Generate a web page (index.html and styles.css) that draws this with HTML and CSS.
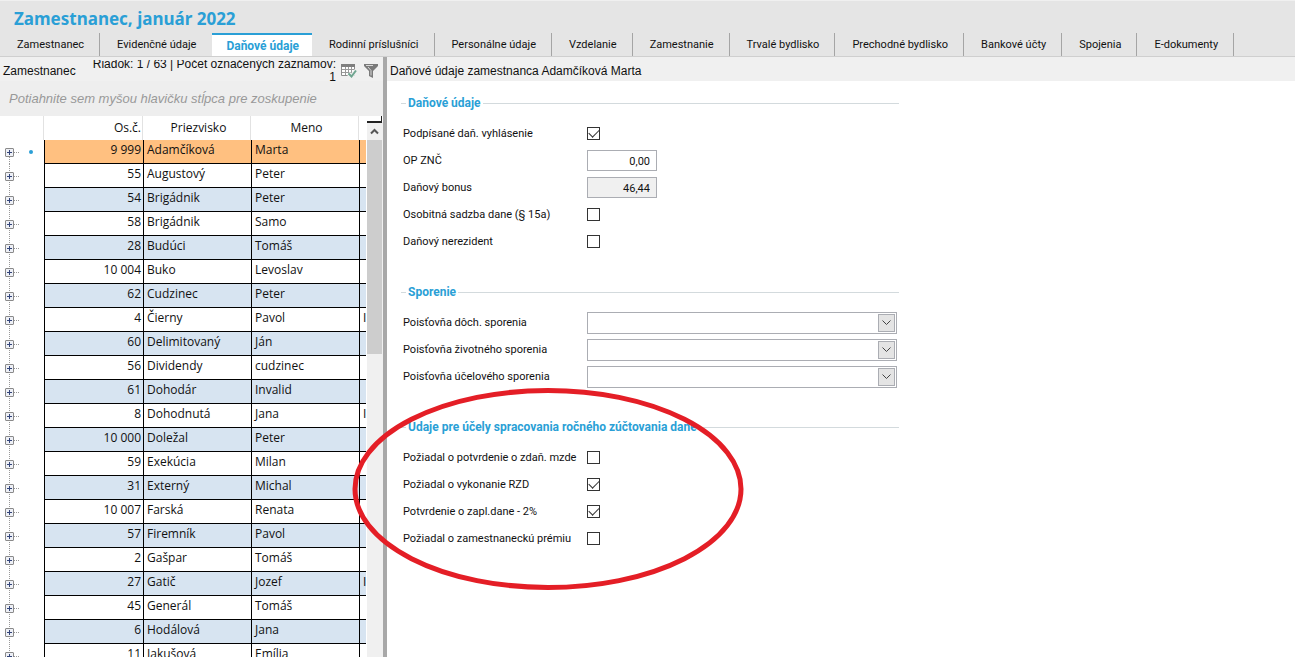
FILE: index.html
```html
<!DOCTYPE html>
<html lang="sk">
<head>
<meta charset="utf-8">
<title>Zamestnanec, január 2022</title>
<link rel="stylesheet" href="styles.css">
</head>
<body>
<div class="app">
  <header class="header">
    <h1 class="title">Zamestnanec, január 2022</h1>
    <nav class="tabs">
      <button class="tab">Zamestnanec</button>
      <button class="tab before-active">Evidenčné údaje</button>
      <button class="tab active">Daňové údaje</button>
      <button class="tab">Rodinní príslušníci</button>
      <button class="tab">Personálne údaje</button>
      <button class="tab">Vzdelanie</button>
      <button class="tab">Zamestnanie</button>
      <button class="tab">Trvalé bydlisko</button>
      <button class="tab">Prechodné bydlisko</button>
      <button class="tab">Bankové účty</button>
      <button class="tab">Spojenia</button>
      <button class="tab">E-dokumenty</button>
    </nav>
  </header>
  <div class="body">
    <aside class="side">
      <div class="side-head">
        <span class="side-title">Zamestnanec</span>
        <span class="side-count">Riadok: 1 / 63 | Počet označených záznamov: 1</span>
        <button class="icon-btn" aria-label="Výber stĺpcov">
          <svg width="16" height="15" viewBox="0 0 16 15"><path d="M.5 1.5h13v11H.5z" fill="#fff" stroke="#8c8c8c"/><path d="M0 1h14v3H0z" fill="#7f7f7f"/><path d="M1 6.500h12M1 9.500h12M4.500 4v8M7.500 4v8M10.500 4v8" stroke="#9a9a9a" fill="none"/><path d="M7.500 10.500l3 3L15 7.500" stroke="#f0f0f0" stroke-width="4" fill="none"/><path d="M7.500 10.500l3 3L15 7.500" stroke="#6fa590" stroke-width="2" fill="none"/></svg>
        </button>
        <button class="icon-btn" aria-label="Filter">
          <svg width="14" height="14" viewBox="0 0 14 14"><path d="M0 0h14v2L9 7v7L5 12V7L0 2z" fill="#7a7a7a"/><path d="M2 1.500h7M4 3l3 3.500v5" stroke="#d8d8d8" fill="none"/></svg>
        </button>
      </div>
      <div class="group-hint">Potiahnite sem myšou hlavičku stĺpca pre zoskupenie</div>
      <div class="grid-area">
        <div class="grid-view">
          <table class="grid">
            <colgroup><col class="c-tree"><col class="c-num"><col class="c-name"><col class="c-name"><col></colgroup>
            <thead><tr><th></th><th class="num">Os.č.</th><th>Priezvisko</th><th>Meno</th><th></th></tr></thead>
            <tbody>
              <tr class="current"><td><button class="exp" aria-label="Rozbaliť"></button><i class="mark"></i></td><td>9 999</td><td>Adamčíková</td><td>Marta</td><td></td></tr>
              <tr><td><button class="exp" aria-label="Rozbaliť"></button></td><td>55</td><td>Augustový</td><td>Peter</td><td></td></tr>
              <tr><td><button class="exp" aria-label="Rozbaliť"></button></td><td>54</td><td>Brigádnik</td><td>Peter</td><td></td></tr>
              <tr><td><button class="exp" aria-label="Rozbaliť"></button></td><td>58</td><td>Brigádnik</td><td>Samo</td><td></td></tr>
              <tr><td><button class="exp" aria-label="Rozbaliť"></button></td><td>28</td><td>Budúci</td><td>Tomáš</td><td></td></tr>
              <tr><td><button class="exp" aria-label="Rozbaliť"></button></td><td>10 004</td><td>Buko</td><td>Levoslav</td><td></td></tr>
              <tr><td><button class="exp" aria-label="Rozbaliť"></button></td><td>62</td><td>Cudzinec</td><td>Peter</td><td></td></tr>
              <tr><td><button class="exp" aria-label="Rozbaliť"></button></td><td>4</td><td>Čierny</td><td>Pavol</td><td>I</td></tr>
              <tr><td><button class="exp" aria-label="Rozbaliť"></button></td><td>60</td><td>Delimitovaný</td><td>Ján</td><td></td></tr>
              <tr><td><button class="exp" aria-label="Rozbaliť"></button></td><td>56</td><td>Dividendy</td><td>cudzinec</td><td></td></tr>
              <tr><td><button class="exp" aria-label="Rozbaliť"></button></td><td>61</td><td>Dohodár</td><td>Invalid</td><td></td></tr>
              <tr><td><button class="exp" aria-label="Rozbaliť"></button></td><td>8</td><td>Dohodnutá</td><td>Jana</td><td>I</td></tr>
              <tr><td><button class="exp" aria-label="Rozbaliť"></button></td><td>10 000</td><td>Doležal</td><td>Peter</td><td></td></tr>
              <tr><td><button class="exp" aria-label="Rozbaliť"></button></td><td>59</td><td>Exekúcia</td><td>Milan</td><td></td></tr>
              <tr><td><button class="exp" aria-label="Rozbaliť"></button></td><td>31</td><td>Externý</td><td>Michal</td><td></td></tr>
              <tr><td><button class="exp" aria-label="Rozbaliť"></button></td><td>10 007</td><td>Farská</td><td>Renata</td><td></td></tr>
              <tr><td><button class="exp" aria-label="Rozbaliť"></button></td><td>57</td><td>Firemník</td><td>Pavol</td><td></td></tr>
              <tr><td><button class="exp" aria-label="Rozbaliť"></button></td><td>2</td><td>Gašpar</td><td>Tomáš</td><td></td></tr>
              <tr><td><button class="exp" aria-label="Rozbaliť"></button></td><td>27</td><td>Gatič</td><td>Jozef</td><td>I</td></tr>
              <tr><td><button class="exp" aria-label="Rozbaliť"></button></td><td>45</td><td>Generál</td><td>Tomáš</td><td></td></tr>
              <tr><td><button class="exp" aria-label="Rozbaliť"></button></td><td>6</td><td>Hodálová</td><td>Jana</td><td></td></tr>
              <tr><td><button class="exp" aria-label="Rozbaliť"></button></td><td>11</td><td>Jakušová</td><td>Emília</td><td></td></tr>
            </tbody>
          </table>
        </div>
        <div class="scroll">
          <div class="scroll-corner"></div>
          <button class="scroll-up" aria-label="Nahor"><svg width="9" height="7" viewBox="0 0 9 7"><path d="M1 5.500l3.500-3.500L8 5.500" fill="none" stroke="#555" stroke-width="2"/></svg></button>
          <div class="scroll-thumb"></div>
        </div>
      </div>
    </aside>
    <main class="main">
      <h2 class="main-head">Daňové údaje zamestnanca Adamčíková Marta</h2>
      <form class="form">
        <fieldset class="section">
          <legend>Daňové údaje</legend>
          <div class="row"><label for="f1">Podpísané daň. vyhlásenie</label><input class="check" type="checkbox" id="f1" checked></div>
          <div class="row"><label for="f2">OP ZNČ</label><input class="amount" type="text" id="f2" value="0,00"></div>
          <div class="row"><label for="f3">Daňový bonus</label><input class="amount" type="text" id="f3" value="46,44" readonly></div>
          <div class="row"><label for="f4">Osobitná sadzba dane (§ 15a)</label><input class="check" type="checkbox" id="f4"></div>
          <div class="row"><label for="f5">Daňový nerezident</label><input class="check" type="checkbox" id="f5"></div>
        </fieldset>
        <fieldset class="section">
          <legend>Sporenie</legend>
          <div class="row"><label for="f6">Poisťovňa dôch. sporenia</label><span class="combo"><select id="f6"><option></option></select><span class="arrow"><svg width="9" height="6" viewBox="0 0 9 6"><path d="M.5.5l4 4 4-4" fill="none" stroke="#444"/></svg></span></span></div>
          <div class="row"><label for="f7">Poisťovňa životného sporenia</label><span class="combo"><select id="f7"><option></option></select><span class="arrow"><svg width="9" height="6" viewBox="0 0 9 6"><path d="M.5.5l4 4 4-4" fill="none" stroke="#444"/></svg></span></span></div>
          <div class="row"><label for="f8">Poisťovňa účelového sporenia</label><span class="combo"><select id="f8"><option></option></select><span class="arrow"><svg width="9" height="6" viewBox="0 0 9 6"><path d="M.5.5l4 4 4-4" fill="none" stroke="#444"/></svg></span></span></div>
        </fieldset>
        <fieldset class="section">
          <legend>Údaje pre účely spracovania ročného zúčtovania dane</legend>
          <div class="row"><label for="f9">Požiadal o potvrdenie o zdaň. mzde</label><input class="check" type="checkbox" id="f9"></div>
          <div class="row"><label for="f10">Požiadal o vykonanie RZD</label><input class="check" type="checkbox" id="f10" checked></div>
          <div class="row"><label for="f11">Potvrdenie o zapl.dane - 2%</label><input class="check" type="checkbox" id="f11" checked></div>
          <div class="row"><label for="f12">Požiadal o zamestnaneckú prémiu</label><input class="check" type="checkbox" id="f12"></div>
        </fieldset>
      </form>
    </main>
  </div>
  <svg class="highlight" width="392" height="204" viewBox="0 0 392 204"><ellipse cx="196" cy="102" rx="193" ry="98.500" fill="none" stroke="#e41e26" stroke-width="5"/></svg>
</div>
</body>
</html>
```
FILE: styles.css
```css
* { box-sizing: border-box; }
body {
  margin: 0;
  font: 11px/16px Roboto, "Liberation Sans", sans-serif;
  color: #111;
  background: #fff;
}
button, input, select { font: inherit; color: inherit; margin: 0; }
button { border: 0; padding: 0; background: none; }
.app {
  position: relative;
  display: flex;
  flex-direction: column;
  height: 100vh;
  overflow: hidden;
}

/* header */
.header {
  background: #e5e5e5;
  border-top: 1px solid #f0f0f0;
  border-bottom: 1px solid #cfcfcf;
}
.title {
  margin: 0;
  padding: 6px 14px 2px;
  font: bold 17px/24px "Noto Sans", sans-serif;
  color: #2a9fd6;
}
.tabs { display: flex; }
.tab {
  height: 23px;
  padding: 1px 15px 0 17px;
  border-right: 1px solid #a5a5a5;
  white-space: nowrap;
}
.tab.before-active { border-right-color: transparent; }
.tab.active {
  padding: 0 13px 0 14px;
  background: #fff;
  border-top: 2px solid #2a9fd6;
  border-right: 0;
  color: #2a9fd6;
  font-size: 12px;
  font-weight: bold;
}

/* employee list */
.body { display: flex; flex: 1; min-height: 0; }
.side {
  display: flex;
  flex-direction: column;
  width: 387px;
  flex: none;
  border-right: 4px solid #a8a8a8;
  background: #f0f0f0;
}
.side-head {
  display: flex;
  align-items: center;
  height: 24px;
  padding: 3px 5px 0 3px;
  font: 12px/16px "Liberation Sans", sans-serif;
}
.side-count {
  flex: 1;
  height: 21px;
  display: flex;
  align-items: center;
  overflow: hidden;
  padding-left: 8px;
  margin-right: 5px;
  line-height: 13px;
  text-align: right;
}
.icon-btn { display: flex; }
.icon-btn + .icon-btn { margin-left: 7px; }
.group-hint {
  height: 35px;
  padding-left: 9px;
  background: #eee;
  font: italic 13px/35px "Liberation Sans", sans-serif;
  color: #999;
  white-space: nowrap;
}
.grid-area { display: flex; flex: 1; min-height: 0; background: #fff; }
.grid-view { flex: 1; overflow: hidden; }
.grid {
  width: 100%;
  table-layout: fixed;
  border-collapse: separate;
  border-spacing: 0;
  font: 12px/16px "Open Sans", "Noto Sans", sans-serif;
}
.c-tree { width: 44px; }
.c-num { width: 99px; }
.c-name { width: 108px; }
.grid th {
  height: 24px;
  padding: 0 1px 0 5px;
  font-weight: normal;
  border-right: 1px solid #e2e2e2;
}
.grid th:last-child { border-right: 0; }
.grid th.num { text-align: right; }
.grid td {
  height: 24px;
  padding: 0 0 4px 3px;
  overflow: hidden;
  white-space: nowrap;
  border-left: 1px solid #000;
  border-bottom: 1px solid #000;
}
.grid td:nth-child(2) { text-align: right; padding-right: 2px; }
.grid tr:nth-child(odd) td { background-color: #d7e4f1; }
.grid tr.current td { background-color: #ffc080; }
.grid tr td:first-child {
  padding: 0 0 0 5px;
  border: 0;
  line-height: 0;
  background:
    repeating-linear-gradient(#999 0 1px, transparent 1px 2px) 9px 0 / 1px 100% no-repeat,
    repeating-linear-gradient(90deg, #999 0 1px, transparent 1px 2px) 14px 12px / 5px 1px no-repeat;
}
.grid tr.current td:first-child { background-position: 9px 17px, 14px 12px; }
.exp {
  width: 9px;
  height: 9px;
  border: 1px solid #8a8a8a;
  border-radius: 1px;
  vertical-align: middle;
  background:
    linear-gradient(#33457a, #33457a) center / 5px 1px no-repeat,
    linear-gradient(#33457a, #33457a) center / 1px 5px no-repeat,
    #eef0f6;
}
.mark {
  display: inline-block;
  width: 4px;
  height: 4px;
  margin-left: 15px;
  border-radius: 2px;
  background: #2a9fd6;
  vertical-align: middle;
}
.scroll {
  display: flex;
  flex-direction: column;
  width: 17px;
  flex: none;
  padding: 0 1px;
  background: linear-gradient(#f0f0f0, #f0f0f0) 1px 6px / 16px 100% no-repeat;
}
.scroll-corner {
  height: 7px;
  border-right: 1px solid #222;
  border-bottom: 2px solid #222;
}
.scroll-up { display: flex; align-items: center; justify-content: center; height: 17px; }
.scroll-thumb { height: 214px; background: #cdcdcd; }

/* detail form */
.main { flex: 1; min-width: 0; }
.main-head {
  margin: 0;
  padding: 6px 3px 2px;
  background: #f0f0f0;
  font: 12px/16px "Liberation Sans", sans-serif;
}
.form {
  display: flex;
  flex-direction: column;
  gap: 27px;
  max-width: 512px;
  padding: 12px 0 0 14px;
}
.section {
  margin: 0;
  padding: 7px 2px 0;
  border: 0;
  border-top: 1px solid #d3dadd;
  min-width: 0;
}
.section legend {
  margin-left: 3px;
  padding: 0 2px;
  font-size: 12px;
  font-weight: bold;
  line-height: 20px;
  color: #2a9fd6;
}
.row {
  display: grid;
  grid-template-columns: 184px 1fr;
  align-items: center;
  height: 27px;
}
.row label { padding-top: 1px; white-space: nowrap; }
.check {
  appearance: none;
  display: grid;
  place-items: center;
  width: 13px;
  height: 13px;
  border: 1px solid #333;
  background: #fff;
}
.check:checked::after {
  content: "";
  width: 9px;
  height: 5px;
  margin-bottom: 3px;
  border-left: 1px solid #333;
  border-bottom: 1px solid #333;
  transform: rotate(-45deg);
}
.amount {
  width: 70px;
  height: 21px;
  padding: 1px 6px 0;
  border: 1px solid #abadb3;
  background: #fff;
  text-align: right;
}
.amount[readonly] { background: #f0f0f0; }
.combo { display: grid; }
.combo select {
  grid-area: 1 / 1;
  appearance: none;
  width: 100%;
  height: 22px;
  padding: 0 24px 0 4px;
  border: 1px solid #abadb3;
  border-radius: 0;
  background: #fff;
}
.arrow {
  grid-area: 1 / 1;
  justify-self: end;
  align-self: center;
  display: flex;
  align-items: center;
  justify-content: center;
  width: 17px;
  height: 18px;
  margin-right: 2px;
  border: 1px solid #abadb3;
  background: #e4e4e4;
  pointer-events: none;
}
.highlight {
  position: absolute;
  left: 352px;
  top: 387px;
  pointer-events: none;
}
```
